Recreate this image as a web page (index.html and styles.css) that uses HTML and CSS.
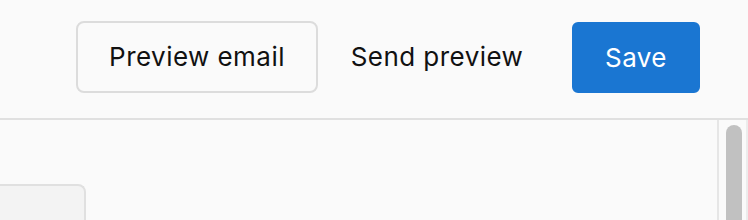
FILE: index.html
```html
<!DOCTYPE html>
<html lang="en">
<head>
<meta charset="utf-8">
<title>Email editor</title>
<link rel="stylesheet" href="styles.css">
</head>
<body>
<header class="toolbar">
  <button class="btn btn-outline">Preview email</button>
  <button class="btn btn-text">Send preview</button>
  <button class="btn btn-primary">Save</button>
</header>
<main class="workspace">
  <section class="canvas">
    <div class="card"></div>
  </section>
  <aside class="scrollbar">
    <div class="thumb"></div>
  </aside>
</main>
</body>
</html>
```
FILE: styles.css
```css
* { box-sizing: border-box; }
html, body {
  margin: 0;
  height: 100%;
  overflow: hidden;
  background: #fafafa;
  font-family: Inter, "Noto Sans", "Liberation Sans", sans-serif;
}
.toolbar {
  height: 120px;
  border-bottom: 2px solid #e0e0e0;
  display: flex;
  justify-content: flex-end;
  align-items: flex-start;
  padding: 21px 48px 0 0;
}
.btn {
  font-family: inherit;
  font-size: 26px;
  letter-spacing: 0.45px;
  line-height: 1;
  height: 72px;
  padding: 0;
  border-radius: 8px;
  cursor: pointer;
  color: #111;
  background: transparent;
  border: 2px solid transparent;
}
.btn-outline {
  width: 242px;
  border-color: #dcdcdc;
  background: #fafafa;
}
.btn-text {
  width: 238px;
  margin-right: 16px;
}
.btn-primary {
  width: 128px;
  height: 71px;
  margin-top: 1px;
  background: #1a76d2;
  border-color: #1a76d2;
  color: #fff;
  border-radius: 6px;
}
.workspace {
  display: flex;
  height: 100px;
}
.canvas {
  flex: 1;
  padding-top: 64px;
}
.card {
  width: 106px;
  height: 36px;
  margin-left: -20px;
  background: #f3f3f3;
  border: 2px solid #e0e0e0;
  border-bottom: 0;
  border-radius: 8px 8px 0 0;
}
.scrollbar {
  width: 31px;
  border-left: 2px solid #e6e6e6;
  border-right: 2px solid #ececec;
  padding: 5px 0 0 7px;
  background: #fafafa;
}
.thumb {
  width: 16px;
  height: 95px;
  border-radius: 8px 8px 0 0;
  background: #c1c1c1;
}
```
